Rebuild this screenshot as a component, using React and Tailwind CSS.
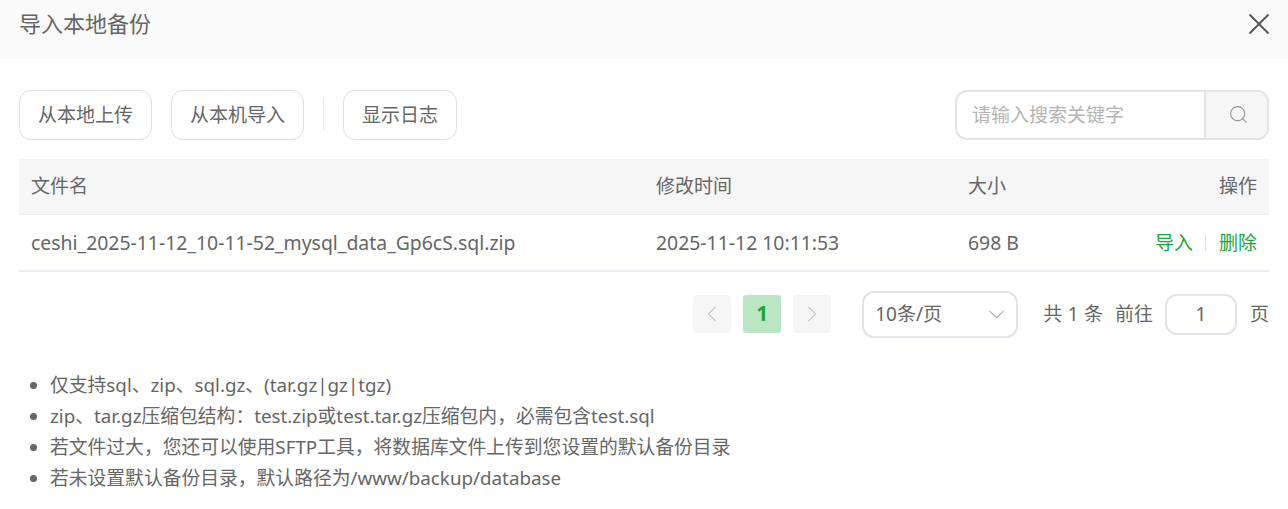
import React from "react";
import { X, Search, ChevronLeft, ChevronRight, ChevronDown } from "lucide-react";

const notes = [
  "仅支持sql、zip、sql.gz、(tar.gz|gz|tgz)",
  "zip、tar.gz压缩包结构：test.zip或test.tar.gz压缩包内，必需包含test.sql",
  "若文件过大，您还可以使用SFTP工具，将数据库文件上传到您设置的默认备份目录",
  "若未设置默认备份目录，默认路径为/www/backup/database",
];

function OutlineButton({ children, width }) {
  return (
    <button className={`h-[50px] rounded-[12px] border border-[#dcdfe6] bg-white text-[#666] ${width}`}>
      {children}
    </button>
  );
}

export default function App() {
  return (
    <div className="w-[1288px] h-[509px] overflow-hidden bg-white text-[19px] text-[#666] font-['Noto_Sans','Noto_Sans_CJK_SC',sans-serif]">
      <div className="h-[59px] bg-[#fafafa] flex items-center justify-between pl-[19px] pr-[11px]">
        <span className="text-[22px] leading-[30px] mb-[13px] text-[#666]">导入本地备份</span>
        <X size={36} strokeWidth={1.2} className="text-[#555] mb-[11px]" />
      </div>

      <div className="px-[19px] pt-[31px]">
        <div className="flex items-center justify-between">
          <div className="flex items-center">
            <OutlineButton width="w-[133px]">从本地上传</OutlineButton>
            <OutlineButton width="w-[133px] ml-[19px]">从本机导入</OutlineButton>
            <div className="w-px h-[32px] bg-[#e4e7ed] mx-[19px]"></div>
            <OutlineButton width="w-[114px]">显示日志</OutlineButton>
          </div>
          <div className="flex h-[50px] w-[314px] rounded-[12px] border-2 border-[#e1e3ea] overflow-hidden">
            <div className="flex-1 pl-[15px] flex items-center text-[#b4b4b4]">请输入搜索关键字</div>
            <div className="w-[63px] bg-[#f6f6f6] border-l-2 border-[#e1e3ea] flex items-center justify-center">
              <Search size={21} strokeWidth={1.2} className="text-[#909399] ml-[3px] mb-[2px]" />
            </div>
          </div>
        </div>

        <div className="mt-[19px]">
          <div className="h-[56px] bg-[#f6f6f6] border-b border-[#ebeef5] flex items-center px-[12px]">
            <span className="w-[625px]">文件名</span>
            <span className="w-[312px]">修改时间</span>
            <span className="flex-1">大小</span>
            <span>操作</span>
          </div>
          <div className="h-[57px] border-b-2 border-[#ebeef5] flex items-center px-[12px] pt-[1px]">
            <span className="w-[625px] text-[19.4px]">ceshi_2025-11-12_10-11-52_mysql_data_Gp6cS.sql.zip</span>
            <span className="w-[312px] text-[19.4px]">2025-11-12 10:11:53</span>
            <span className="flex-1 text-[19.4px]">698 B</span>
            <span className="flex items-center text-[#20a53a]">
              导入
              <span className="w-px h-[16px] bg-[#dcdfe6] ml-[12px] mr-[13px]"></span>
              删除
            </span>
          </div>
        </div>

        <div className="flex items-center justify-end mt-[19px] h-[46px]">
          <div className="w-[38px] h-[38px] rounded-[3px] bg-[#f6f6f6] flex items-center justify-center">
            <ChevronLeft size={28} strokeWidth={0.9} className="text-[#b4b6bc]" />
          </div>
          <div className="w-[38px] h-[38px] ml-[12px] rounded-[3px] bg-[#bce5c4] flex items-center justify-center font-bold text-[21px] text-[#20a53a]">
            1
          </div>
          <div className="w-[38px] h-[38px] ml-[12px] rounded-[3px] bg-[#f6f6f6] flex items-center justify-center">
            <ChevronRight size={28} strokeWidth={0.9} className="text-[#b4b6bc]" />
          </div>
          <div className="w-[156px] h-[47px] ml-[31px] rounded-[12px] border-2 border-[#e1e3ea] flex items-center justify-between pl-[11px] pr-[6px]">
            <span>10条/页</span>
            <ChevronDown size={27} strokeWidth={0.9} className="text-[#a8abb2]" />
          </div>
          <span className="ml-[25px] [word-spacing:0.5px]">共 1 条</span>
          <span className="ml-[12px]">前往</span>
          <div className="w-[72px] h-[41px] ml-[12px] rounded-[12px] border-2 border-[#e1e3ea] flex items-center justify-center">
            1
          </div>
          <span className="ml-[13px]">页</span>
        </div>

        <ul className="mt-[33px] ml-[11px] list-disc pl-[20px] text-[18.8px] marker:text-[#666]">
          {notes.map((note) => (
            <li key={note} className="leading-[30.9px]">{note}</li>
          ))}
        </ul>
      </div>
    </div>
  );
}
